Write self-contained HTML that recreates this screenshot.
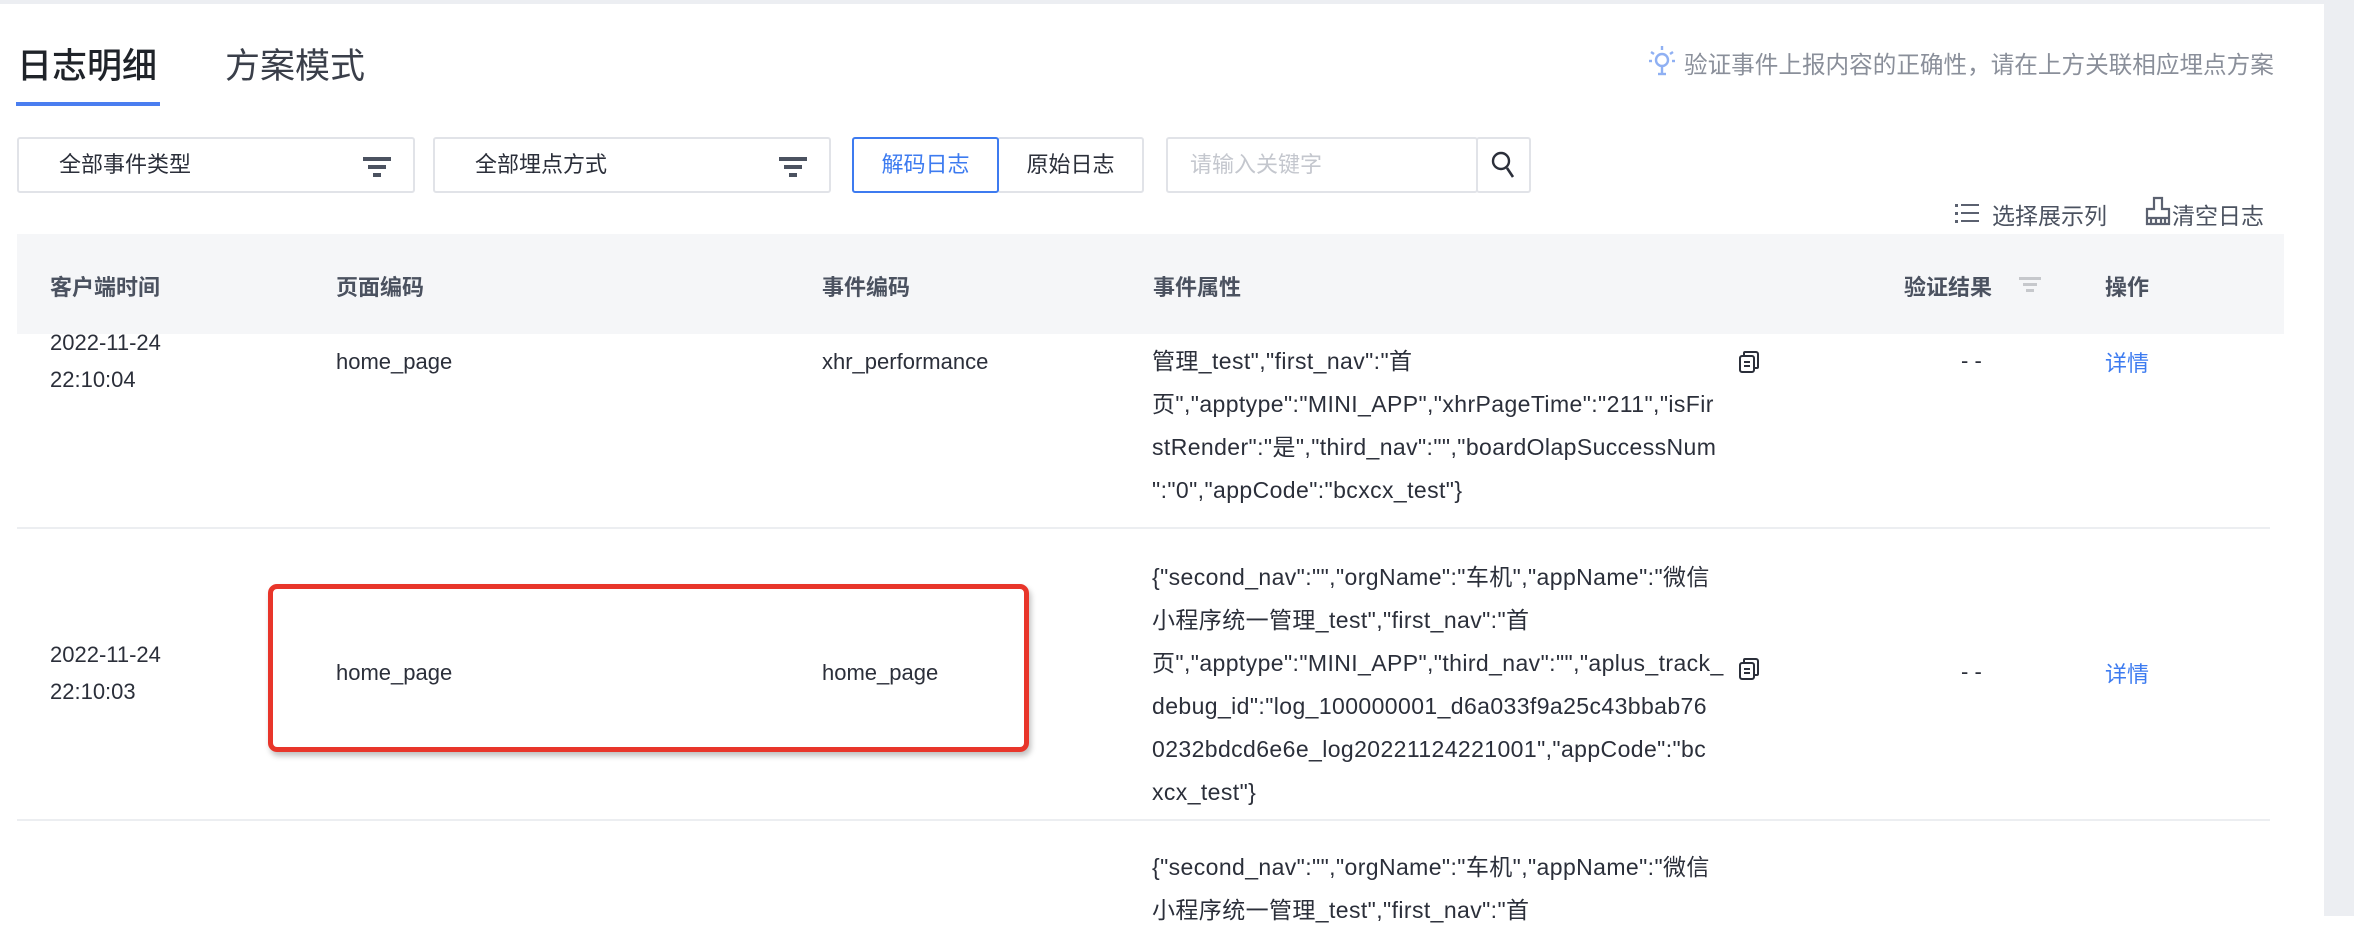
<!DOCTYPE html>
<html><head><meta charset="utf-8">
<style>
*{margin:0;padding:0;box-sizing:border-box}
body{width:2354px;height:916px;overflow:hidden;background:#fff;font-family:"Liberation Sans","Noto Sans CJK SC",sans-serif;color:#2b2f3a;position:relative}
.a{position:absolute;white-space:nowrap}
.gray{position:absolute;background:#eceef2}
.sel{position:absolute;border:2px solid #e1e3e8;border-radius:3px;height:56px;top:137px;font-size:22px;color:#2b2f3a;line-height:52px}
.fi{position:absolute;right:22px;top:18px;width:28px}
.fi i{display:block;height:4px;background:#4b5260;margin:0 auto 4px}
.hd{font-size:22px;color:#4b5260;font-weight:bold}
.t{font-size:22px;color:#2b2f3a}
.attr{font-size:23px;color:#2b2f3a;line-height:43px;letter-spacing:0.4px}
.blue{color:#3d7bf0}
</style></head><body>
<div class="gray" style="left:0;top:0;width:2354px;height:4px"></div>
<div class="gray" style="left:2324px;top:0;width:30px;height:916px"></div>

<div class="a" style="left:17px;top:38px;font-size:35px;color:#1f2329;font-weight:500">日志明细</div>
<div class="a" style="left:225px;top:38px;font-size:35px;color:#3a3f4a">方案模式</div>
<div class="a" style="left:16px;top:102px;width:144px;height:4px;background:#4a7ef0"></div>

<svg class="a" style="left:1647px;top:44px" width="30" height="34" viewBox="0 0 30 34"><g stroke="#8fb0f3" stroke-width="2.4" fill="none"><circle cx="15" cy="16" r="6"/><line x1="15" y1="22" x2="15" y2="30"/><line x1="11" y1="30" x2="19" y2="30"/><line x1="15" y1="2" x2="15" y2="6"/><line x1="4" y1="8" x2="7" y2="10"/><line x1="26" y1="8" x2="23" y2="10"/><line x1="2" y1="17" x2="5" y2="17"/><line x1="28" y1="17" x2="25" y2="17"/></g></svg>
<div class="a" style="left:1684px;top:46px;font-size:23.6px;color:#8a8f9a">验证事件上报内容的正确性，请在上方关联相应埋点方案</div>

<div class="sel" style="left:17px;width:398px"><span style="padding-left:40px">全部事件类型</span><div class="fi"><i style="width:28px"></i><i style="width:18px"></i><i style="width:8px"></i></div></div>
<div class="sel" style="left:433px;width:398px"><span style="padding-left:40px">全部埋点方式</span><div class="fi"><i style="width:28px"></i><i style="width:18px"></i><i style="width:8px"></i></div></div>
<div class="sel" style="left:852px;width:147px;border-color:#3d7bf0;text-align:center;color:#3d7bf0;z-index:2">解码日志</div>
<div class="sel" style="left:997px;width:147px;text-align:center">原始日志</div>
<div class="sel" style="left:1166px;width:312px;color:#c4c7ce"><span style="padding-left:22px">请输入关键字</span></div>
<div class="sel" style="left:1476px;width:55px"></div>
<svg class="a" style="left:1490px;top:150px" width="28" height="30" viewBox="0 0 28 30"><circle cx="11" cy="11" r="8" stroke="#2b2f3a" stroke-width="2.4" fill="none"/><line x1="17" y1="18" x2="23" y2="27" stroke="#2b2f3a" stroke-width="2.6"/></svg>

<svg class="a" style="left:1955px;top:202px" width="24" height="22" viewBox="0 0 24 22"><g fill="#5b6170"><rect x="0" y="2" width="3" height="3"/><rect x="6" y="2" width="18" height="2"/><rect x="0" y="10" width="3" height="3"/><rect x="6" y="10" width="18" height="2"/><rect x="0" y="18" width="3" height="3"/><rect x="6" y="18" width="18" height="2"/></g></svg>
<div class="a" style="left:1992px;top:197px;font-size:23px;color:#4b5260">选择展示列</div>
<svg class="a" style="left:2145px;top:196px" width="26" height="30" viewBox="0 0 26 30"><path d="M9 2h8v11h7v15H2V13h7z M6 28v-5 M11 28v-5 M16 28v-5 M20 28v-5 M2 22h22" stroke="#5b6170" stroke-width="2.2" fill="none"/></svg>
<div class="a" style="left:2172px;top:197px;font-size:23px;color:#4b5260">清空日志</div>

<div class="a" style="left:17px;top:234px;width:2267px;height:100px;background:#f5f6f8"></div>
<div class="a hd" style="left:50px;top:270px">客户端时间</div>
<div class="a hd" style="left:336px;top:270px">页面编码</div>
<div class="a hd" style="left:822px;top:270px">事件编码</div>
<div class="a hd" style="left:1153px;top:270px">事件属性</div>
<div class="a hd" style="left:1904px;top:270px">验证结果</div>
<div class="a" style="left:2019px;top:277px;width:22px"><i style="display:block;height:3px;width:22px;background:#c6c8cc;margin:0 auto 3px"></i><i style="display:block;height:3px;width:14px;background:#c6c8cc;margin:0 auto 3px"></i><i style="display:block;height:3px;width:8px;background:#c6c8cc;margin:0 auto"></i></div>
<div class="a hd" style="left:2105px;top:270px">操作</div>

<!-- row1 -->
<div class="a t" style="left:50px;top:324px;line-height:37px">2022-11-24<br>22:10:04</div>
<div class="a t" style="left:336px;top:349px">home_page</div>
<div class="a t" style="left:822px;top:349px">xhr_performance</div>
<div class="a attr" style="left:1152px;top:340px">管理_test","first_nav":"首<br>页","apptype":"MINI_APP","xhrPageTime":"211","isFir<br>stRender":"是","third_nav":"","boardOlapSuccessNum<br>":"0","appCode":"bcxcx_test"}</div>
<svg class="a" style="left:1738px;top:350px" width="22" height="24" viewBox="0 0 22 24"><g stroke="#2b2f3a" stroke-width="2" fill="none"><rect x="2" y="6" width="14" height="16" rx="2"/><path d="M6 6V3a1 1 0 0 1 1-1h11a2 2 0 0 1 2 2v13a1 1 0 0 1-1 1h-3"/><line x1="6" y1="12" x2="12" y2="12"/><line x1="6" y1="16" x2="12" y2="16"/></g></svg>
<div class="a t" style="left:1961px;top:348px">- -</div>
<div class="a t blue" style="left:2105px;top:346px">详情</div>
<div class="a" style="left:17px;top:527px;width:2253px;height:2px;background:#eceef1"></div>

<!-- row2 -->
<div class="a t" style="left:50px;top:636px;line-height:37px">2022-11-24<br>22:10:03</div>
<div class="a t" style="left:336px;top:660px">home_page</div>
<div class="a t" style="left:822px;top:660px">home_page</div>
<div class="a attr" style="left:1152px;top:556px">{"second_nav":"","orgName":"车机","appName":"微信<br>小程序统一管理_test","first_nav":"首<br>页","apptype":"MINI_APP","third_nav":"","aplus_track_<br>debug_id":"log_100000001_d6a033f9a25c43bbab76<br>0232bdcd6e6e_log20221124221001","appCode":"bc<br>xcx_test"}</div>
<svg class="a" style="left:1738px;top:657px" width="22" height="24" viewBox="0 0 22 24"><g stroke="#2b2f3a" stroke-width="2" fill="none"><rect x="2" y="6" width="14" height="16" rx="2"/><path d="M6 6V3a1 1 0 0 1 1-1h11a2 2 0 0 1 2 2v13a1 1 0 0 1-1 1h-3"/><line x1="6" y1="12" x2="12" y2="12"/><line x1="6" y1="16" x2="12" y2="16"/></g></svg>
<div class="a t" style="left:1961px;top:659px">- -</div>
<div class="a t blue" style="left:2105px;top:657px">详情</div>
<div class="a" style="left:268px;top:584px;width:761px;height:168px;border:5px solid #e8352a;border-radius:9px;box-shadow:2px 4px 6px rgba(0,0,0,0.25)"></div>
<div class="a" style="left:17px;top:819px;width:2253px;height:2px;background:#eceef1"></div>

<!-- row3 -->
<div class="a attr" style="left:1152px;top:846px">{"second_nav":"","orgName":"车机","appName":"微信<br>小程序统一管理_test","first_nav":"首</div>
</body></html>
